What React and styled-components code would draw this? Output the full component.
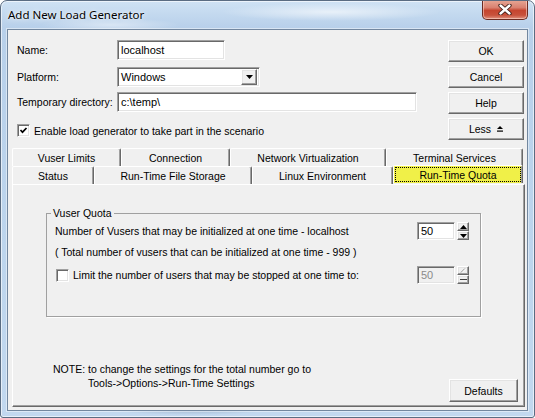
import React from 'react';
import styled, { createGlobalStyle } from 'styled-components';

const GlobalStyle = createGlobalStyle`
  html, body {
    margin: 0;
    padding: 0;
    background: #ffffff;
  }
  body {
    font-family: "Liberation Sans", Arial, sans-serif;
    font-size: 10.5px;
    color: #000;
  }
`;

const Window = styled.div`
  width: 535px;
  height: 418px;
  box-sizing: border-box;
  border: 1px solid #5a6c82;
  border-radius: 7px 7px 3px 3px;
  padding: 0 6px 6px;
  display: flex;
  flex-direction: column;
  overflow: hidden;
  background:
    radial-gradient(ellipse 110px 9px at 330px 11px, rgba(255, 255, 255, 0.6), transparent),
    radial-gradient(ellipse 70px 7px at 110px 24px, rgba(255, 255, 255, 0.45), transparent),
    radial-gradient(ellipse 80px 6px at 190px 408px, rgba(90, 110, 140, 0.35), transparent),
    linear-gradient(180deg, #cfe2f4 0, #b8d0ea 26px, #bdd5ed 60%, #c2d8ef 100%);
  box-shadow: inset 0 0 0 1px rgba(255, 255, 255, 0.6);
`;

const TitleBar = styled.div`
  height: 28px;
  display: flex;
  justify-content: space-between;
  align-items: flex-start;
`;

const Title = styled.span`
  font-family: "Noto Sans", "Liberation Sans", sans-serif;
  font-size: 11.5px;
  line-height: 16px;
  margin: 6px 0 0 1px;
  color: #000;
  text-shadow: 0 0 6px rgba(255, 255, 255, 0.95), 0 0 2px rgba(255, 255, 255, 0.9);
`;

const CloseButton = styled.div`
  width: 46px;
  height: 20px;
  margin-top: -1px;
  box-sizing: border-box;
  border: 1px solid #6b2b22;
  border-top: none;
  border-radius: 0 0 5px 5px;
  display: flex;
  align-items: center;
  justify-content: center;
  background: linear-gradient(180deg, #e7a896 0%, #d98170 40%, #c5452f 55%, #c8523c 80%, #e09280 100%);
  box-shadow: inset 0 0 0 1px rgba(255, 220, 210, 0.55);
`;

const Client = styled.div`
  flex: 1;
  display: flex;
  flex-direction: column;
  background: #f0f0f0;
  border: 1px solid #72879f;
  box-shadow: 0 0 0 1px rgba(255, 255, 255, 0.45);
`;

const Top = styled.div`
  display: flex;
  justify-content: space-between;
  padding: 10px 3px 0 9px;
`;

const Form = styled.div`
  display: flex;
  flex-direction: column;
`;

const FieldRow = styled.div`
  display: flex;
  align-items: center;
  height: 20px;
  margin-top: ${p => p.$gap || 0}px;
`;

const Label = styled.span`
  width: 100px;
  white-space: nowrap;
`;

const sunken = `
  box-sizing: border-box;
  background: #fff;
  border-style: solid;
  border-width: 1px;
  border-color: #a0a0a0 #fff #fff #a0a0a0;
  box-shadow: inset 1px 1px 0 #696969, inset -1px -1px 0 #e3e3e3;
`;

const raised = `
  box-sizing: border-box;
  background: #f0f0f0;
  border-style: solid;
  border-width: 1px;
  border-color: #fff #696969 #696969 #fff;
  box-shadow: inset -1px -1px 0 #a0a0a0, inset 1px 1px 0 #e3e3e3;
`;

const TextBox = styled.div`
  ${sunken}
  width: ${p => p.$w}px;
  padding: 0 3px;
  display: flex;
  align-items: center;
  white-space: nowrap;
  font-size: 11px;
  color: ${p => (p.$disabled ? '#8a8a8a' : '#000')};
  background: ${p => (p.$disabled ? '#f0f0f0' : '#fff')};
  height: ${p => p.$h || 20}px;
`;

const Select = styled.div`
  ${sunken}
  width: 143px;
  height: 20px;
  padding: 2px 2px 2px 3px;
  display: flex;
  align-items: center;
  justify-content: space-between;
  font-size: 11px;
`;

const DropButton = styled.div`
  ${raised}
  width: 16px;
  height: 16px;
  display: flex;
  align-items: center;
  justify-content: center;
`;

const CheckRow = styled.label`
  display: flex;
  align-items: center;
  gap: ${p => p.$gap || 4}px;
  margin-top: ${p => p.$top || 0}px;
  margin-left: ${p => p.$left || 0}px;
  height: 13px;
  white-space: nowrap;
`;

const CheckBox = styled.span`
  ${sunken}
  width: 13px;
  height: 13px;
  display: flex;
  align-items: center;
  justify-content: center;
`;

const ButtonColumn = styled.div`
  display: flex;
  flex-direction: column;
  gap: 4px;
`;

const Button = styled.button`
  ${raised}
  width: ${p => p.$w || 76}px;
  height: ${p => p.$h || 22}px;
  padding: 0;
  font-family: "Liberation Sans", Arial, sans-serif;
  font-size: 10.5px;
  color: #000;
  display: flex;
  align-items: center;
  justify-content: center;
  gap: 6px;
`;

const Tabs = styled.div`
  flex: 1;
  display: flex;
  flex-direction: column;
  margin: 8px 2px 3px 4px;
`;

const TabRow = styled.div`
  display: flex;
  height: 18px;
`;

const Tab = styled.div`
  box-sizing: border-box;
  width: ${p => p.$w}px;
  height: 18px;
  margin-top: ${p => (p.$active ? -1 : 0)}px;
  display: flex;
  align-items: center;
  justify-content: center;
  white-space: nowrap;
  border-top: 1px solid #fff;
  border-left: 1px solid #fff;
  border-right: 1px solid #696969;
  border-radius: 2px 2px 0 0;
  box-shadow: inset -1px 0 0 #a0a0a0;
  background: ${p => (p.$active ? '#f0f048' : '#f0f0f0')};
  padding: ${p => (p.$active ? '1px' : '0')};
  position: relative;
  z-index: ${p => (p.$active ? 1 : 0)};
`;

const Focus = styled.span`
  flex: 1;
  align-self: stretch;
  display: flex;
  align-items: center;
  justify-content: center;
  border: 1px dotted #000;
`;

const Panel = styled.div`
  flex: 1;
  display: flex;
  flex-direction: column;
  box-sizing: border-box;
  border-style: solid;
  border-width: 1px;
  border-color: #fff #696969 #696969 #fff;
  box-shadow: inset -1px -1px 0 #a0a0a0;
  padding: 22px 6px 4px 33px;
`;

const Group = styled.fieldset`
  width: 435px;
  box-sizing: border-box;
  margin: 0;
  padding: 2px 11px 32px 8px;
  border: 1px solid #a0a0a0;
  box-shadow: 1px 1px 0 #fff;
  min-inline-size: 0;
`;

const Legend = styled.legend`
  padding: 0 2px;
  margin-left: -4px;
  line-height: 13px;
`;

const QuotaRow = styled.div`
  display: flex;
  align-items: center;
  justify-content: space-between;
  height: ${p => p.$h || 18}px;
  margin-top: ${p => p.$top || 0}px;
  white-space: nowrap;
`;

const Spinner = styled.div`
  display: flex;
  gap: 2px;
`;

const SpinButtons = styled.div`
  display: flex;
  flex-direction: column;
  width: 12px;
  height: 18px;
`;

const SpinHalf = styled.div`
  ${raised}
  flex: 1;
  display: flex;
  align-items: center;
  justify-content: center;
`;

const Footer = styled.div`
  margin-top: auto;
  display: flex;
  justify-content: space-between;
  align-items: flex-end;
`;

const Note = styled.div`
  margin: 0 0 12px 7px;
  line-height: 14px;
`;

const NoteIndent = styled.div`
  padding-left: 35px;
`;

const Arrow = ({ dir, color = '#000' }) => (
  <svg width="7" height="4" viewBox="0 0 7 4">
    {dir === 'up'
      ? <polygon points="3.5,0 7,4 0,4" fill={color} />
      : <polygon points="0,0 7,0 3.5,4" fill={color} />}
  </svg>
);

const CheckMark = () => (
  <svg width="9" height="9" viewBox="0 0 9 9">
    <polyline points="1.5,4 3.5,6.2 7.5,2" fill="none" stroke="#000" strokeWidth="1.7" />
  </svg>
);

const LessIcon = () => (
  <svg width="6" height="6" viewBox="0 0 6 6">
    <polygon points="3,0 6,3 0,3" fill="#000" />
    <rect x="0" y="4.5" width="6" height="1.2" fill="#000" />
  </svg>
);

const CloseGlyph = () => (
  <svg width="14" height="11" viewBox="0 0 14 11">
    <path d="M2.5 1.5 L11.5 9.5 M11.5 1.5 L2.5 9.5" stroke="#3b1a14" strokeWidth="4.2" strokeLinecap="round" />
    <path d="M2.5 1.5 L11.5 9.5 M11.5 1.5 L2.5 9.5" stroke="#ffffff" strokeWidth="2.4" strokeLinecap="round" />
  </svg>
);

const NumberSpin = ({ value, disabled }) => (
  <Spinner>
    <TextBox $w={38} $h={18} $disabled={disabled}>{value}</TextBox>
    <SpinButtons>
      <SpinHalf>
        {disabled ? (
          <svg width="7" height="5" viewBox="0 0 7 5">
            <path d="M1 4.5 L5 0.5" stroke="#808080" strokeWidth="1" />
            <path d="M2 4.5 L6 0.5" stroke="#ffffff" strokeWidth="1" />
          </svg>
        ) : <Arrow dir="up" />}
      </SpinHalf>
      <SpinHalf>
        {disabled ? (
          <svg width="7" height="3" viewBox="0 0 7 3">
            <rect x="0" y="1" width="7" height="1" fill="#404040" />
          </svg>
        ) : <Arrow dir="down" />}
      </SpinHalf>
    </SpinButtons>
  </Spinner>
);

const backTabs = [
  { label: 'Vuser Limits', w: 109 },
  { label: 'Connection', w: 109 },
  { label: 'Network Virtualization', w: 156 },
  { label: 'Terminal Services', w: 137 },
];

const frontTabs = [
  { label: 'Status', w: 82 },
  { label: 'Run-Time File Storage', w: 158 },
  { label: 'Linux Environment', w: 141 },
  { label: 'Run-Time Quota', w: 130, active: true },
];

export default function App() {
  return (
    <>
      <GlobalStyle />
      <Window>
        <TitleBar>
          <Title>Add New Load Generator</Title>
          <CloseButton><CloseGlyph /></CloseButton>
        </TitleBar>
        <Client>
          <Top>
            <Form>
              <FieldRow>
                <Label>Name:</Label>
                <TextBox $w={108}>localhost</TextBox>
              </FieldRow>
              <FieldRow $gap={7}>
                <Label>Platform:</Label>
                <Select>
                  <span>Windows</span>
                  <DropButton><Arrow dir="down" /></DropButton>
                </Select>
              </FieldRow>
              <FieldRow $gap={5}>
                <Label>Temporary directory:</Label>
                <TextBox $w={300}>c:\temp\</TextBox>
              </FieldRow>
              <CheckRow $top={12}>
                <CheckBox><CheckMark /></CheckBox>
                Enable load generator to take part in the scenario
              </CheckRow>
            </Form>
            <ButtonColumn>
              <Button>OK</Button>
              <Button>Cancel</Button>
              <Button>Help</Button>
              <Button>Less <LessIcon /></Button>
            </ButtonColumn>
          </Top>
          <Tabs>
            <TabRow>
              {backTabs.map(t => <Tab key={t.label} $w={t.w}>{t.label}</Tab>)}
            </TabRow>
            <TabRow>
              {frontTabs.map(t => (
                <Tab key={t.label} $w={t.w} $active={t.active}>
                  {t.active ? <Focus>{t.label}</Focus> : t.label}
                </Tab>
              ))}
            </TabRow>
            <Panel>
              <Group>
                <Legend>Vuser Quota</Legend>
                <QuotaRow>
                  <span>Number of Vusers that may be initialized at one time - localhost</span>
                  <NumberSpin value="50" />
                </QuotaRow>
                <QuotaRow $h={14} $top={5}>
                  <span>( Total number of vusers that can be initialized at one time - 999 )</span>
                </QuotaRow>
                <QuotaRow $top={7}>
                  <CheckRow $left={1}>
                    <CheckBox />
                    Limit the number of users that may be stopped at one time to:
                  </CheckRow>
                  <NumberSpin value="50" disabled />
                </QuotaRow>
              </Group>
              <Footer>
                <Note>
                  <div>NOTE: to change the settings for the total number go to</div>
                  <NoteIndent>Tools-&gt;Options-&gt;Run-Time Settings</NoteIndent>
                </Note>
                <Button $w={69} $h={23}>Defaults</Button>
              </Footer>
            </Panel>
          </Tabs>
        </Client>
      </Window>
    </>
  );
}
